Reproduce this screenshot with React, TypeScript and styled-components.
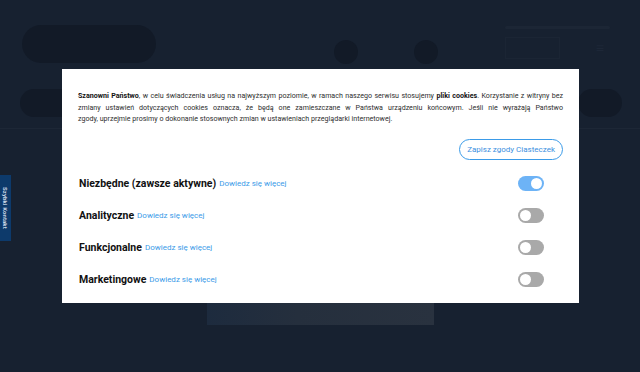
import React, { useState } from 'react'
import styled, { createGlobalStyle } from 'styled-components'

const GlobalStyle = createGlobalStyle`
  html, body { margin: 0; padding: 0; }
  body {
    font-family: Roboto, "Liberation Sans", Arial, sans-serif;
    background: #172130;
    width: 640px;
    height: 372px;
    overflow: hidden;
  }
`

const Page = styled.div`
  width: 640px;
  height: 372px;
  background: #172130;
  display: flex;
  flex-direction: column;
`

const Header = styled.header`
  height: 78px;
  display: flex;
  align-items: center;
  padding: 0 22px;
  box-sizing: border-box;
`

const LogoPill = styled.div`
  width: 134px;
  height: 38px;
  border-radius: 19px;
  background: #121a27;
  margin-top: 10px;
`

const IconGroup = styled.div`
  display: flex;
  gap: 56px;
  margin-left: 178px;
  margin-top: 26px;
`

const Dot = styled.div`
  width: 24px;
  height: 24px;
  border-radius: 50%;
  background: #121a27;
`

const HeaderRight = styled.div`
  margin-left: auto;
  margin-right: 8px;
  width: 105px;
  display: flex;
  flex-direction: column;
  gap: 8px;
  margin-top: 6px;
`

const TopLine = styled.div`
  width: 105px;
  height: 3px;
  border-radius: 2px;
  background: #1c2635;
`

const UtilRow = styled.div`
  display: flex;
  align-items: center;
  justify-content: space-between;
`

const UtilBox = styled.div`
  width: 55px;
  height: 22px;
  border: 1px solid #1b2534;
  box-sizing: border-box;
`

const MenuGlyph = styled.span`
  color: #1d2737;
  font-size: 14px;
  line-height: 1;
  margin-right: 6px;
`

const Nav = styled.nav`
  height: 50px;
  display: flex;
  align-items: center;
  justify-content: space-between;
  padding: 0 18px 0 20px;
  border-bottom: 1px solid #1d2736;
`

const NavPill = styled.div<{ $w: number }>`
  width: ${(p) => p.$w}px;
  height: 28px;
  border-radius: 14px;
  background: #121a27;
`

const Content = styled.main`
  flex: 1;
  display: flex;
  justify-content: center;
  align-items: flex-end;
  padding-bottom: 47px;
`

const Banner = styled.div`
  width: 227px;
  height: 35px;
  margin-left: 1px;
  background: linear-gradient(90deg, #1d2b3e 0%, #252f3d 40%, #29323f 100%);
`

const SideTab = styled.div`
  position: fixed;
  left: 0;
  top: 175px;
  width: 11px;
  height: 66px;
  background: #0d3a6b;
  color: #c9d6e6;
  font-size: 6px;
  font-weight: 700;
  writing-mode: vertical-rl;
  display: flex;
  align-items: center;
  justify-content: center;
  letter-spacing: 0.1px;
`

const Modal = styled.div`
  position: fixed;
  left: 62px;
  top: 69px;
  width: 517px;
  height: 234px;
  background: #ffffff;
  box-sizing: border-box;
  padding: 21px 16px 0 16px;
  display: flex;
  flex-direction: column;
`

const Intro = styled.div`
  font-size: 7.1px;
  line-height: 11.5px;
  color: #2e2e2e;
  b { color: #111111; font-weight: 700; }
`

const IntroLine = styled.span<{ $last?: boolean }>`
  display: block;
  white-space: nowrap;
  text-align: justify;
  text-align-last: ${(p) => (p.$last ? 'left' : 'justify')};
`

const Actions = styled.div`
  display: flex;
  justify-content: flex-end;
  margin-top: 14px;
`

const SaveButton = styled.button`
  height: 21px;
  padding: 0 7px;
  border: 1.5px solid #3b9be8;
  border-radius: 11px;
  background: #fff;
  color: #3b8fe0;
  font-family: inherit;
  font-size: 8px;
  cursor: pointer;
`

const List = styled.div`
  display: flex;
  flex-direction: column;
  margin-top: 8px;
`

const Row = styled.div`
  height: 32px;
  display: flex;
  align-items: center;
  padding-left: 1px;
  padding-right: 19px;
`

const Label = styled.span`
  font-size: 10.5px;
  font-weight: 700;
  color: #111111;
`

const More = styled.a`
  font-size: 8px;
  color: #3b9be8;
  margin-left: 3px;
  text-decoration: none;
`

const Toggle = styled.span<{ $on: boolean }>`
  margin-left: auto;
  width: 26px;
  height: 15px;
  border-radius: 8px;
  background: ${(p) => (p.$on ? '#6db3f6' : '#a9a9a9')};
  position: relative;
  &::after {
    content: '';
    position: absolute;
    top: 2px;
    left: ${(p) => (p.$on ? '13px' : '2px')};
    width: 11px;
    height: 11px;
    border-radius: 50%;
    background: #ffffff;
  }
`

const rows = [
  { label: 'Niezbędne (zawsze aktywne)', on: true },
  { label: 'Analityczne', on: false },
  { label: 'Funkcjonalne', on: false },
  { label: 'Marketingowe', on: false },
]

export default function App() {
  const [state, setState] = useState(rows.map((r) => r.on))

  return (
    <>
      <GlobalStyle />
      <Page>
        <Header>
          <LogoPill />
          <IconGroup>
            <Dot />
            <Dot />
          </IconGroup>
          <HeaderRight>
            <TopLine />
            <UtilRow>
              <UtilBox />
              <MenuGlyph>≡</MenuGlyph>
            </UtilRow>
          </HeaderRight>
        </Header>
        <Nav>
          <NavPill $w={60} />
          <NavPill $w={44} />
        </Nav>
        <Content>
          <Banner />
        </Content>
      </Page>
      <SideTab>Szybki Kontakt</SideTab>
      <Modal>
        <Intro>
          <IntroLine>
            <b>Szanowni Państwo</b>, w celu świadczenia usług na najwyższym poziomie, w ramach naszego serwisu stosujemy{' '}
            <b>pliki cookies</b>. Korzystanie z witryny bez
          </IntroLine>
          <IntroLine>
            zmiany ustawień dotyczących cookies oznacza, że będą one zamieszczane w Państwa urządzeniu końcowym. Jeśli
            nie wyrażają Państwo
          </IntroLine>
          <IntroLine $last>
            zgody, uprzejmie prosimy o dokonanie stosownych zmian w ustawieniach przeglądarki internetowej.
          </IntroLine>
        </Intro>
        <Actions>
          <SaveButton>Zapisz zgody Ciasteczek</SaveButton>
        </Actions>
        <List>
          {rows.map((r, i) => (
            <Row key={r.label}>
              <Label>{r.label}</Label>
              <More href="#">Dowiedz się więcej</More>
              <Toggle
                $on={state[i]}
                onClick={() => i > 0 && setState((s) => s.map((v, j) => (j === i ? !v : v)))}
              />
            </Row>
          ))}
        </List>
      </Modal>
    </>
  )
}
